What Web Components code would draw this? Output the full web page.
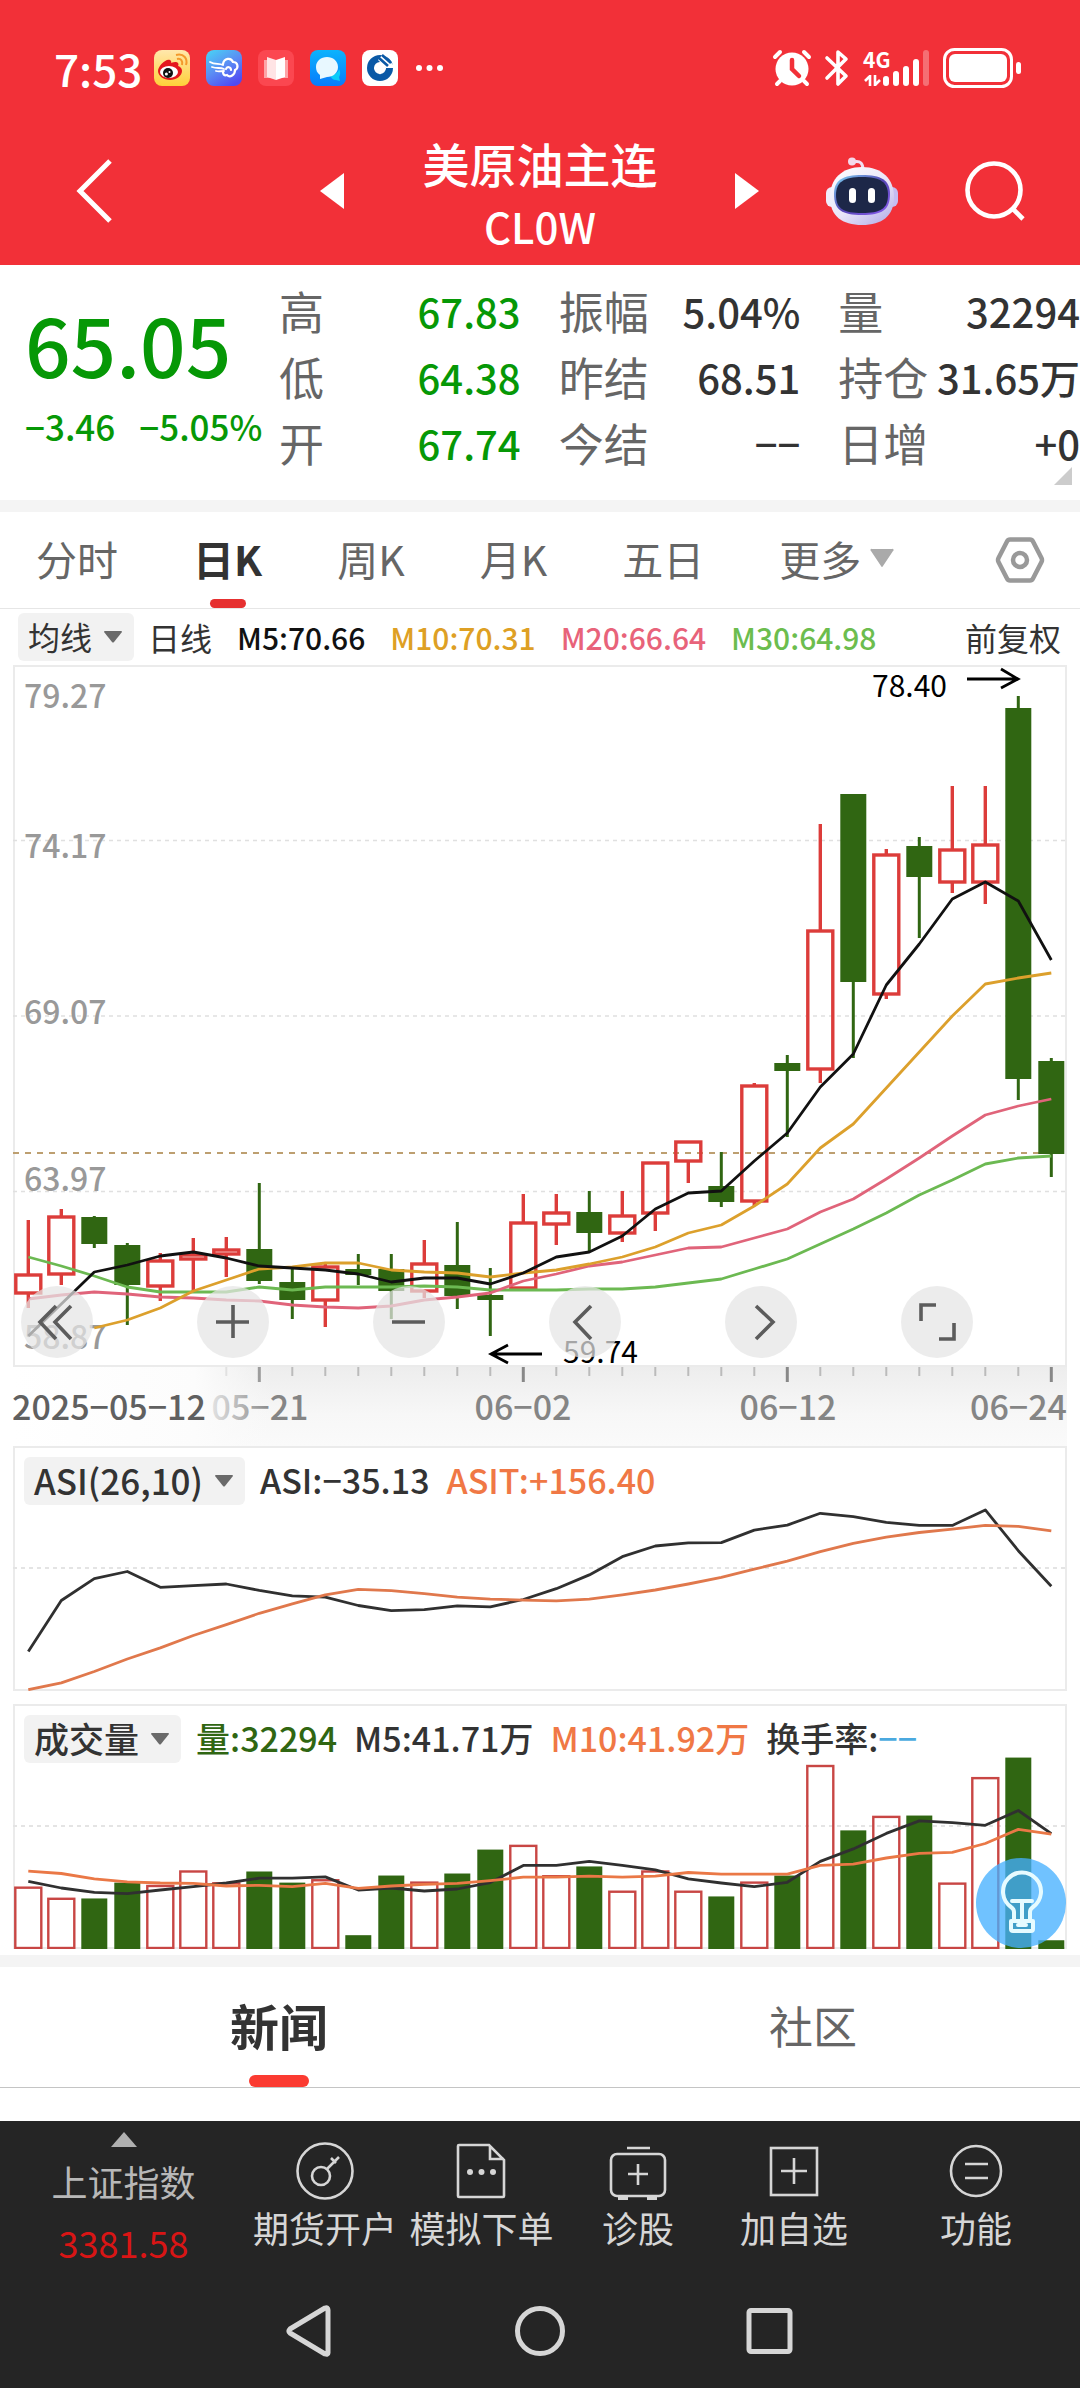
<!DOCTYPE html>
<html lang="zh-CN">
<head>
<meta charset="utf-8">
<meta name="viewport" content="width=device-width, initial-scale=1">
<title>美原油主连</title>
<style>
  :root {
    --red: #f23038;
    --up: #dc3c3a;
    --down: #306612;
    --green: #069806;
    --ink: #333;
    --muted: #666;
    --line: #ebebeb;
    --chip: #f2f2f2;
    --dark: #252525;
    --orange: #f07845;
  }
  body {
    margin: 0;
    background: #fff;
    color: var(--ink);
    font-family: "Noto Sans CJK SC", "Noto Sans", sans-serif;
  }
</style>
</head>
<body>
<status-bar></status-bar>
<stock-header><span slot="name">美原油主连</span><span slot="code">CL0W</span></stock-header>
<quote-panel>
  <span slot="price">65.05</span><span slot="change">−3.46</span><span slot="percent">−5.05%</span>
  <quote-cell tone="down" label="高">67.83</quote-cell>
  <quote-cell label="振幅">5.04%</quote-cell>
  <quote-cell label="量">32294</quote-cell>
  <quote-cell tone="down" label="低">64.38</quote-cell>
  <quote-cell label="昨结">68.51</quote-cell>
  <quote-cell label="持仓">31.65万</quote-cell>
  <quote-cell tone="down" label="开">67.74</quote-cell>
  <quote-cell label="今结">−−</quote-cell>
  <quote-cell label="日增">+0</quote-cell>
</quote-panel>
<period-tabs></period-tabs>
<average-legend></average-legend>
<candle-chart></candle-chart>
<date-axis></date-axis>
<indicator-panel kind="asi" label="ASI(26,10)">
  <span>ASI:−35.13</span>
  <span style="color: var(--orange)">ASIT:+156.40</span>
</indicator-panel>
<indicator-panel kind="volume" label="成交量">
  <span style="color: var(--down)">量:32294</span>
  <span>M5:41.71万</span>
  <span style="color: var(--orange)">M10:41.92万</span>
  <span>换手率:<span style="color: #4ba9df">−−</span></span>
  <tip-button slot="tip"></tip-button>
</indicator-panel>
<news-tabs></news-tabs>
<market-footer></market-footer>
<system-nav></system-nav>

<script>
const resetButton = `
  button {
    font: inherit;
    color: inherit;
    border: none;
    background: none;
    padding: 0;
    margin: 0;
  }
  svg { display: block; overflow: visible; }
`;

// bar centres, 32 bars on a 33px step
const barX = i => 28.3 + i * 33;
const polyline = (values, color, y, start = 0) =>
  `<polyline fill="none" stroke="${color}" stroke-width="2.8" stroke-linejoin="round" points="${
    values.map((v, i) => `${barX(i + start).toFixed(1)},${y(v).toFixed(1)}`).join(" ")}"/>`;

class StatusBar extends HTMLElement {
  constructor() {
    super();
    this.attachShadow({ mode: "open" });
    this.shadowRoot.innerHTML = `
    <style>
      ${resetButton}
      :host {
        display: flex;
        align-items: center;
        justify-content: space-between;
        background: var(--red);
        color: #fff;
        padding: 32px 59px 8px 54px;
        height: 72px;
      }
      .side { display: flex; align-items: center; }
      .time { font-size: 44px; line-height: 64px; font-weight: 500; margin-right: 12px; }
      .apps { display: flex; gap: 16px; margin-right: 18px; }
      .right { gap: 14px; }
    </style>
    <div class="side">
      <span class="time">7:53</span>
      <div class="apps">
        <svg width="36" height="36" viewBox="0 0 36 36">
          <defs><linearGradient id="w" x2="0" y2="1"><stop stop-color="#ffe7ac"/><stop offset="1" stop-color="#ffd039"/></linearGradient></defs>
          <rect width="36" height="36" rx="8" fill="url(#w)"/>
          <path d="M4 21c0-5 8-13 12-11 2 1 1 3 1 3s5-2 7 0c1 1 0 3 0 3s4 1 4 5c0 5-6 9-12 9S4 26 4 21z" fill="#e5161d"/>
          <ellipse cx="15" cy="22" rx="9" ry="6" fill="#fff"/>
          <circle cx="14" cy="23" r="5" fill="#111"/><circle cx="12.400" cy="24" r="1.500" fill="#fff"/><circle cx="15.500" cy="22" r="1" fill="#fff"/>
          <path d="M23 9c4-1 6 2 5 6M22 5c8-2 12 4 10 10" fill="none" stroke="#f3992b" stroke-width="2"/>
        </svg>
        <svg width="36" height="36" viewBox="0 0 36 36">
          <defs><linearGradient id="c" x1=".1" y1="0" x2=".7" y2="1"><stop stop-color="#49d0f5"/><stop offset=".5" stop-color="#5b8df4"/><stop offset="1" stop-color="#5149f2"/></linearGradient></defs>
          <rect width="36" height="36" rx="8" fill="url(#c)"/>
          <g fill="none" stroke="#fff" stroke-linecap="round">
            <path d="M4 12c5 3 9 1 13 3M6 17c5 2 8 0 12 2M10 21c3 1 5 0 8 0" stroke-width="1.800"/>
            <path d="M17 14c1-6 8-7 10-2 5 0 6 6 2 8 0 5-5 8-8 5-3 1-4-1-4-3M20 19c1-3 5-2 5 1" stroke-width="2.200"/>
          </g>
        </svg>
        <svg width="36" height="36" viewBox="0 0 36 36">
          <rect width="36" height="36" rx="8" fill="#fb4750"/>
          <path d="M6 10h24v18H6z" fill="#fda3a6"/>
          <path d="M9 7l9 3v20l-9-3z" fill="#ffe4e5"/><path d="M27 7l-9 3v20l9-3z" fill="#fff"/>
        </svg>
        <svg width="36" height="36" viewBox="0 0 36 36">
          <defs><linearGradient id="m" x2="0" y2="1"><stop stop-color="#0cb3fd"/><stop offset="1" stop-color="#087bfb"/></linearGradient></defs>
          <rect width="36" height="36" rx="8" fill="url(#m)"/>
          <path d="M20 25c6 0 9-4 9-6 2 3 1 7 0 8l1 4-4-1c-3 0-5-2-6-5z" fill="#09ccf9"/>
          <path d="M17 7c6 0 11 4 11 10s-5 10-11 10l-7 2 0-4c-3-2-4-5-4-8 0-6 5-10 11-10z" fill="#e8f8ff"/>
        </svg>
        <svg width="36" height="36" viewBox="0 0 36 36">
          <rect width="36" height="36" rx="8" fill="#fff"/>
          <circle cx="18" cy="18" r="9.500" fill="none" stroke="#0a59a6" stroke-width="7"/>
          <path d="M18 12.500l6 6-6 6-6-6z" fill="#fff"/>
          <path d="M21 4l13 14H24l-8-8z" fill="#fff"/>
          <path d="M20 5l9 8M17 8l9 8" stroke="#0a59a6" stroke-width="2.600"/>
        </svg>
      </div>
      <svg width="28" height="8" viewBox="0 0 28 8" fill="#fff"><circle cx="3" cy="4" r="3"/><circle cx="13.500" cy="4" r="3"/><circle cx="24" cy="4" r="3"/></svg>
    </div>
    <div class="side right">
      <svg width="38" height="38" viewBox="0 0 38 38" fill="none" stroke="#fff" stroke-linecap="round">
        <circle cx="19" cy="20" r="16.500" fill="#fff" stroke="none"/>
        <path d="M2 8l5-5M36 8l-5-5M7 32l-3 3M31 32l3 3" stroke-width="4"/>
        <path d="M19 11v9l7 7" stroke="var(--red)" stroke-width="4.500"/>
      </svg>
      <svg width="24" height="38" viewBox="0 0 24 38" fill="none" stroke="#fff" stroke-width="3.600" stroke-linejoin="round" stroke-linecap="round">
        <path d="M2 9l19 18-8 8V3l8 7L2 29"/>
      </svg>
      <svg width="66" height="38" viewBox="0 0 66 38">
        <text x="0" y="19" font-size="21" font-weight="700" fill="#fff">4G</text>
        <path d="M7 26v11M7 27l-5 5M12 26v11M12 36l5-5" fill="none" stroke="#fff" stroke-width="2.600"/>
        <g stroke="#fff" stroke-width="6" stroke-linecap="round"><path d="M23 30v4M33 25v9M43 20v14M53 13v21"/><path d="M63 4v30" opacity=".3"/></g>
      </svg>
      <svg width="78" height="40" viewBox="0 0 78 40">
        <rect x="1.500" y="1.500" width="67" height="37" rx="10" fill="none" stroke="#fff" stroke-width="3"/>
        <rect x="6" y="6" width="58" height="28" rx="6" fill="#fff"/>
        <rect x="73" y="14" width="5" height="12" rx="2.500" fill="#fff"/>
      </svg>
    </div>
    `;
  }
}
customElements.define("status-bar", StatusBar);

class StockHeader extends HTMLElement {
  constructor() {
    super();
    this.attachShadow({ mode: "open" });
    this.shadowRoot.innerHTML = `
    <style>
      ${resetButton}
      :host {
        display: grid;
        grid-template-columns: 1fr auto 1fr;
        align-items: center;
        background: var(--red);
        color: #fff;
        height: 153px;
      }
      .left, .right { display: flex; align-items: center; justify-content: space-between; }
      .left { padding: 4px 79px 0 76px; }
      .right { padding: 4px 55px 0 77px; }
      .title { text-align: center; font-weight: 500; padding-top: 10px; }
      .name { font-size: 47px; line-height: 64px; }
      .code { font-size: 42px; line-height: 62px; }
    </style>
    <div class="left">
      <button aria-label="返回"><svg width="37" height="66" viewBox="0 0 37 66"><path d="M34 3L4 33l30 30" fill="none" stroke="#fff" stroke-width="5"/></svg></button>
      <button aria-label="上一个"><svg width="24" height="36" viewBox="0 0 24 36"><path d="M24 0v36L0 18z" fill="#fff"/></svg></button>
    </div>
    <div class="title">
      <div class="name"><slot name="name"></slot></div>
      <div class="code"><slot name="code"></slot></div>
    </div>
    <div class="right">
      <button aria-label="下一个"><svg width="24" height="36" viewBox="0 0 24 36"><path d="M0 0v36l24-18z" fill="#fff"/></svg></button>
      <button aria-label="助手">
        <svg width="72" height="68" viewBox="0 0 72 68">
          <defs>
            <linearGradient id="h" x2=".8" y2="1"><stop stop-color="#fff"/><stop offset=".6" stop-color="#e9e4f8"/><stop offset="1" stop-color="#b9b4ea"/></linearGradient>
            <linearGradient id="v" x2="1" y2="1"><stop stop-color="#7fd8f5"/><stop offset=".5" stop-color="#5646b5"/><stop offset="1" stop-color="#8b5cf0"/></linearGradient>
          </defs>
          <path d="M27 5c8-2 10 2 10 8" fill="none" stroke="#f1dff2" stroke-width="3"/>
          <circle cx="26" cy="4.500" r="4" fill="#f4d8ea"/>
          <rect x="0" y="30" width="12" height="20" rx="6" fill="#f0ecfb"/><rect x="60" y="30" width="12" height="20" rx="6" fill="#c5bdf2"/>
          <path d="M36 10c20 0 32 12 32 30 0 19-12 28-32 28S4 59 4 40C4 22 16 10 36 10z" fill="url(#h)"/>
          <path d="M36 18c19 0 28 5 28 19 0 16-8 21-28 21S8 53 8 37c0-14 9-19 28-19z" fill="url(#v)"/>
          <path d="M36 20c18 0 26 5 26 18 0 14-8 18-26 18s-26-4-26-18c0-13 8-18 26-18z" fill="#1d2748"/>
          <rect x="23" y="31" width="7" height="15" rx="3.500" fill="#fff"/><rect x="42" y="31" width="7" height="15" rx="3.500" fill="#fff"/>
        </svg>
      </button>
      <button aria-label="搜索"><svg width="60" height="60" viewBox="0 0 60 60" fill="none" stroke="#fff" stroke-width="4.600"><circle cx="29" cy="29" r="26.500"/><path d="M48 48l10 10"/></svg></button>
    </div>
    `;
  }
}
customElements.define("stock-header", StockHeader);

class QuoteCell extends HTMLElement {
  constructor() {
    super();
    this.attachShadow({ mode: "open" });
    this.shadowRoot.innerHTML = `
    <style>
      :host {
        display: flex;
        justify-content: space-between;
        align-items: center;
        line-height: 66px;
        white-space: nowrap;
        font-size: 40px;
        font-weight: 500;
      }
      :host([tone="down"]) { color: var(--green); }
      .label { font-size: 45px; font-weight: 400; color: var(--muted); }
    </style>
    <span class="label">${this.getAttribute("label")}</span>
    <slot></slot>
    `;
  }
}
customElements.define("quote-cell", QuoteCell);

class QuotePanel extends HTMLElement {
  constructor() {
    super();
    this.attachShadow({ mode: "open" });
    this.shadowRoot.innerHTML = `
    <style>
      :host {
        display: flex;
        position: relative;
        padding: 13px 0 24px 25px;
        border-bottom: 12px solid #f4f4f4;
      }
      .summary { flex: 0 0 254px; color: var(--green); font-weight: 500; white-space: nowrap; }
      .price { font-size: 80px; line-height: 116px; padding-top: 7px; }
      .moves { display: flex; gap: 24px; font-size: 35px; line-height: 50px; }
      .grid { flex: 1; display: grid; grid-template-columns: repeat(3, 1fr); column-gap: 38px; }
      .more { position: absolute; right: 8px; bottom: 15px; }
    </style>
    <div class="summary">
      <div class="price"><slot name="price"></slot></div>
      <div class="moves"><slot name="change"></slot><slot name="percent"></slot></div>
    </div>
    <div class="grid"><slot></slot></div>
    <svg class="more" width="18" height="18" viewBox="0 0 18 18"><path d="M18 0v18H0z" fill="#ccc"/></svg>
    `;
  }
}
customElements.define("quote-panel", QuotePanel);

class PeriodTabs extends HTMLElement {
  constructor() {
    super();
    this.attachShadow({ mode: "open" });
    this.shadowRoot.innerHTML = `
    <style>
      ${resetButton}
      :host {
        display: flex;
        align-items: center;
        gap: 75px;
        height: 96px;
        padding: 0 36px;
        border-bottom: 1px solid #e6e6e6;
        font-size: 41px;
        color: var(--muted);
      }
      button { position: relative; height: 96px; line-height: 92px; padding-bottom: 4px; white-space: nowrap; }
      .active { font-weight: 700; color: var(--ink); }
      .active::after {
        content: "";
        position: absolute;
        left: 50%;
        bottom: 0;
        width: 36px;
        height: 9px;
        margin-left: -18px;
        border-radius: 5px;
        background: #e63030;
      }
      .more { display: flex; align-items: center; gap: 10px; }
      .settings { margin-left: auto; padding: 0; }
    </style>
    <button>分时</button>
    <button class="active">日K</button>
    <button>周K</button>
    <button>月K</button>
    <button>五日</button>
    <button class="more">更多<svg width="22" height="18" viewBox="0 0 22 18"><path d="M1 0h20a1 1 0 0 1 1 2L12 17q-1 2-2 0L0 2a1 1 0 0 1 1-2z" fill="#aaa"/></svg></button>
    <button class="settings" aria-label="设置"><svg width="48" height="46" viewBox="0 0 48 46" fill="none" stroke="#999" stroke-width="4.500" stroke-linejoin="round"><path d="M14 2.500h20q2 0 3 2L45.500 21q1 2 0 4L37 41.500q-1 2-3 2H14q-2 0-3-2L2.500 25q-1-2 0-4L11 4.500q1-2 3-2z"/><circle cx="24" cy="23" r="7"/></svg></button>
    `;
  }
}
customElements.define("period-tabs", PeriodTabs);

class MenuChip extends HTMLElement {
  constructor() {
    super();
    this.attachShadow({ mode: "open" });
    this.shadowRoot.innerHTML = `
    <style>
      ${resetButton}
      :host { display: block; }
      button {
        display: flex;
        align-items: center;
        gap: 12px;
        height: 48px;
        padding: 0 12px 0 10px;
        border-radius: 6px;
        background: var(--chip);
        line-height: 46px;
        white-space: nowrap;
      }
      slot { display: block; padding-bottom: 2px; }
    </style>
    <button><slot></slot><svg width="18" height="12" viewBox="0 0 18 12"><path d="M1 0h16q1 0 1 1l-8 10q-1 1-2 0L0 1q0-1 1-1z" fill="#6a6a6a"/></svg></button>
    `;
  }
}
customElements.define("menu-chip", MenuChip);

class AverageLegend extends HTMLElement {
  constructor() {
    super();
    this.attachShadow({ mode: "open" });
    this.shadowRoot.innerHTML = `
    <style>
      ${resetButton}
      :host {
        display: flex;
        align-items: center;
        gap: 25px;
        height: 56px;
        padding: 0 19px 0 18px;
        font-size: 30px;
        font-weight: 500;
        white-space: nowrap;
      }
      menu-chip, .plain { font-size: 32px; font-weight: 400; }
      .first { display: flex; align-items: center; gap: 14px; }
      .adjust { margin-left: auto; }
    </style>
    <div class="first"><menu-chip>均线</menu-chip><span class="plain">日线</span></div>
    <span style="color: #111">M5:70.66</span>
    <span style="color: #dea024">M10:70.31</span>
    <span style="color: #e8637a">M20:66.64</span>
    <span style="color: #6cbd4e">M30:64.98</span>
    <button class="plain adjust">前复权</button>
    `;
  }
}
customElements.define("average-legend", AverageLegend);

// [direction, body top, body bottom, high, low]
const candles = [
  ["u", 1275, 1293, 1220, 1308], ["u", 1217, 1274, 1209, 1285], ["d", 1217, 1244, 1216, 1248], ["d", 1245, 1285, 1243, 1325],
  ["u", 1261, 1286, 1253, 1301], ["u", 1255, 1259, 1238, 1291], ["u", 1250, 1254, 1237, 1277], ["d", 1249, 1281, 1183, 1284],
  ["d", 1282, 1300, 1268, 1319], ["u", 1267, 1300, 1264, 1327], ["d", 1269, 1275, 1254, 1285], ["d", 1269, 1291, 1254, 1319],
  ["u", 1264, 1291, 1240, 1298], ["d", 1265, 1296, 1222, 1309], ["d", 1295, 1300, 1268, 1336], ["u", 1223, 1288, 1194, 1290],
  ["u", 1213, 1224, 1194, 1245], ["d", 1212, 1233, 1191, 1251], ["u", 1216, 1233, 1191, 1242], ["u", 1163, 1213, 1163, 1231],
  ["u", 1142, 1161, 1142, 1183], ["d", 1186, 1202, 1152, 1207], ["u", 1086, 1201, 1083, 1206], ["d", 1063, 1071, 1055, 1137],
  ["u", 931, 1069, 824, 1083], ["d", 794, 982, 794, 1058], ["u", 855, 994, 849, 999], ["d", 846, 877, 837, 938],
  ["u", 850, 882, 786, 893], ["u", 845, 882, 786, 904], ["d", 708, 1079, 696, 1100], ["d", 1061, 1154, 1058, 1177]
];
const averages = {
  m30: [1257, 1266, 1276, 1287, 1292, 1292, 1292, 1287, 1290, 1287, 1287, 1287, 1286, 1287, 1290, 1290, 1290, 1289, 1289, 1287, 1283, 1279, 1269, 1259, 1244, 1229, 1213, 1195, 1180, 1164, 1158, 1156],
  m20: [1299, 1295, 1292, 1294, 1297, 1298, 1300, 1301, 1305, 1307, 1308, 1306, 1300, 1297, 1293, 1281, 1274, 1266, 1262, 1255, 1248, 1247, 1238, 1229, 1212, 1199, 1179, 1158, 1136, 1115, 1106, 1099],
  m10: [1328, 1320, 1308, 1291, 1280, 1269, 1267, 1263, 1263, 1270, 1272, 1273, 1277, 1273, 1270, 1264, 1257, 1247, 1233, 1225, 1206, 1184, 1148, 1124, 1088, 1052, 1016, 984, 978, 973],
  m5: [1336, 1304, 1272, 1265, 1256, 1252, 1258, 1266, 1268, 1270, 1274, 1282, 1278, 1278, 1284, 1273, 1257, 1252, 1236, 1209, 1193, 1191, 1161, 1133, 1087, 1054, 985, 944, 899, 882, 901, 960]
};

class CandleChart extends HTMLElement {
  constructor() {
    super();
    const same = v => v;
    const bars = candles.map(([dir, top, bottom, high, low], i) => {
      const x = barX(i);
      if (dir === "d") {
        return `<path d="M${x} ${high}V${low}" stroke="var(--down)" stroke-width="3"/>
          <rect x="${x - 13}" y="${top}" width="26" height="${bottom - top}" fill="var(--down)"/>`;
      }
      return `<path d="M${x} ${high}V${top}M${x} ${bottom}V${low}" stroke="var(--up)" stroke-width="3.400"/>
        <rect x="${x - 12.5}" y="${top}" width="25" height="${bottom - top}" fill="none" stroke="var(--up)" stroke-width="3.400"/>`;
    }).join("");
    const labels = [["79.27", 708], ["74.17", 858], ["69.07", 1024], ["63.97", 1191], ["58.87", 1349]];
    const icons = {
      "最早": `<path d="M35 20L19 36l16 17M50 20L34 36l16 17"/>`,
      "放大": `<path d="M36 19v33M19 36h33"/>`,
      "缩小": `<path d="M19 36h33"/>`,
      "左移": `<path d="M42 20L26 36l16 17"/>`,
      "右移": `<path d="M31 20l17 16-17 17"/>`,
      "全屏": `<path d="M20 35V19h15M53 37v16H38"/>`
    };
    this.attachShadow({ mode: "open" });
    this.shadowRoot.innerHTML = `
    <style>
      ${resetButton}
      :host { display: block; position: relative; margin: 0 13px; }
      .tools {
        position: absolute;
        left: 8px;
        right: 94px;
        bottom: 9px;
        display: flex;
        justify-content: space-between;
      }
      .tools button {
        width: 72px;
        height: 72px;
        border-radius: 50%;
        background: rgba(229, 229, 229, .72);
      }
      .grid { stroke: #e0e0e0; stroke-width: 1.5; stroke-dasharray: 4 4; }
    </style>
    <svg width="100%" viewBox="13 665 1054 702">
      <rect x="14" y="666" width="1052" height="700" fill="none" stroke="var(--line)" stroke-width="2"/>
      <g class="grid"><path d="M13 840.5H1067M13 1016H1067M13 1191.500H1067"/></g>
      <path d="M13 1153H1067" stroke="#bd9f70" stroke-width="2" stroke-dasharray="6 6"/>
      <g font-size="32" font-weight="500" fill="#999">${labels.map(([t, y]) => `<text x="24" y="${y}">${t}</text>`).join("")}</g>
      ${bars}
      ${polyline(averages.m30, "#6cb952", same)}
      ${polyline(averages.m20, "#e0647a", same)}
      ${polyline(averages.m10, "#dca02c", same, 2)}
      ${polyline(averages.m5, "#111", same)}
      <g fill="#000" font-size="30"><text x="872" y="697">78.40</text><text x="563" y="1363">59.74</text></g>
      <path d="M967 679h51M1001 669l17 10-17 9M542 1354h-51M508 1345l-17 9 17 9" fill="none" stroke="#000" stroke-width="2.800"/>
    </svg>
    <div class="tools">${Object.entries(icons).map(([name, path]) => `
      <button aria-label="${name}"><svg width="72" height="72" viewBox="0 0 72 72" fill="none" stroke="#5c5c5c" stroke-width="3.600">${path}</svg></button>`).join("")}
    </div>
    `;
  }
}
customElements.define("candle-chart", CandleChart);

class DateAxis extends HTMLElement {
  constructor() {
    super();
    let ticks = "";
    for (let i = 6; i < 32; i++) {
      const major = [7, 15, 23, 31].includes(i);
      ticks += `<path d="M${barX(i)} 0v${major ? 15 : 9}" stroke="${major ? "#888" : "#bbb"}" stroke-width="${major ? 3 : 2}"/>`;
    }
    this.attachShadow({ mode: "open" });
    this.shadowRoot.innerHTML = `
    <style>
      :host { display: block; margin: 0 13px; }
      svg { display: block; }
    </style>
    <svg width="100%" viewBox="13 0 1054 79" font-size="34" font-weight="500">
      <defs>
        <linearGradient id="bg" x2="0" y2="1"><stop stop-color="#ededed"/><stop offset=".6" stop-color="#f7f7f7"/><stop offset="1" stop-color="#fafafa"/></linearGradient>
        <linearGradient id="fade"><stop stop-color="#fff"/><stop offset=".7" stop-color="#fcfcfc"/><stop offset="1" stop-color="#fafafa" stop-opacity="0"/></linearGradient>
      </defs>
      <rect x="13" width="1054" height="79" fill="url(#bg)"/>
      ${ticks}
      <g fill="#858585">
        <text x="260" y="53" text-anchor="middle">05−21</text>
        <text x="523" y="53" text-anchor="middle">06−02</text>
        <text x="788" y="53" text-anchor="middle">06−12</text>
        <text x="1067" y="53" text-anchor="end">06−24</text>
      </g>
      <rect x="13" width="260" height="79" fill="url(#fade)"/>
      <text x="12" y="53" fill="#606060">2025−05−12</text>
    </svg>
    `;
  }
}
customElements.define("date-axis", DateAxis);

const asi = {
  line: [655, 503, 438, 417, 464, 459, 454, 473, 489, 493, 518, 533, 530, 519, 522, 500, 468, 427, 373, 341, 332, 331, 294, 279, 244, 254, 271, 280, 280, 234, 355, 461],
  trend: [768, 748, 714, 677, 644, 607, 575, 541, 513, 486, 470, 474, 483, 493, 499, 502, 504, 499, 486, 472, 454, 434, 410, 386, 358, 333, 315, 301, 291, 280, 283, 296]
};
const volume = {
  tops: [1353, 1386, 1385, 1338, 1348, 1305, 1340, 1305, 1338, 1331, 1494, 1317, 1338, 1311, 1240, 1229, 1319, 1290, 1365, 1305, 1365, 1379, 1338, 1317, 992, 1183, 1143, 1139, 1341, 1028, 967, 1509],
  m5: [1334, 1354, 1367, 1371, 1360, 1350, 1339, 1325, 1325, 1321, 1360, 1354, 1363, 1357, 1338, 1287, 1287, 1275, 1287, 1300, 1327, 1339, 1350, 1337, 1275, 1238, 1192, 1155, 1160, 1168, 1124, 1193],
  m10: [1304, 1311, 1327, 1336, 1339, 1340, 1348, 1346, 1350, 1340, 1355, 1348, 1343, 1340, 1332, 1322, 1322, 1319, 1322, 1319, 1308, 1313, 1313, 1313, 1287, 1283, 1265, 1251, 1248, 1222, 1180, 1194]
};

class IndicatorPanel extends HTMLElement {
  constructor() {
    super();
    this.attachShadow({ mode: "open" });
    this.shadowRoot.innerHTML = `
    <style>
      :host { display: grid; position: relative; margin: 0 13px 13px; white-space: nowrap; }
      :host([kind="volume"]) { margin-bottom: 6px; }
      svg { display: block; grid-area: 1 / 1; }
      header {
        grid-area: 1 / 1;
        display: flex;
        align-items: center;
        align-self: start;
        gap: 15px;
        padding: 11px 11px 0;
        font-size: 34px;
        font-weight: 500;
      }
      menu-chip { font-size: 35px; }
      .values { display: flex; gap: 17px; line-height: 46px; padding-bottom: 2px; }
      .grid { stroke: #e4e4e4; stroke-width: 2; stroke-dasharray: 4 4; }
    </style>
    <svg width="100%" viewBox="13 0 1054 245">
      <rect x="14" y="1" width="1052" height="243" fill="none" stroke="var(--line)" stroke-width="2"/>
      <path class="grid" d="M13 122H1067"/>
      ${this.getAttribute("kind") === "asi" ? this.drawAsi() : this.drawVolume()}
    </svg>
    <header><menu-chip>${this.getAttribute("label")}</menu-chip><div class="values"><slot></slot></div></header>
    <slot name="tip"></slot>
    `;
  }

  drawAsi() {
    const y = v => 1 + (v - 47) * 243 / 722;
    return polyline(asi.line, "#303030", y) + polyline(asi.trend, "#e0784c", y);
  }

  drawVolume() {
    const y = v => 1 + (v - 811) * 243 / 721;
    const bars = volume.tops.map((v, i) => {
      const top = y(v);
      return candles[i][0] === "d"
        ? `<rect x="${barX(i) - 13}" y="${top}" width="26" height="${245 - top}" fill="var(--down)"/>`
        : `<rect x="${barX(i) - 13}" y="${top}" width="26" height="${244 - top}" fill="none" stroke="#c84644" stroke-width="2.400"/>`;
    }).join("");
    return bars + polyline(volume.m5, "#303030", y) + polyline(volume.m10, "#ea7846", y);
  }
}
customElements.define("indicator-panel", IndicatorPanel);

class TipButton extends HTMLElement {
  constructor() {
    super();
    this.attachShadow({ mode: "open" });
    this.shadowRoot.innerHTML = `
    <style>
      ${resetButton}
      :host { position: absolute; right: 1px; bottom: 1px; }
      button { display: block; width: 90px; height: 90px; border-radius: 50%; background: rgba(69, 176, 255, .77); }
    </style>
    <button aria-label="提示">
      <svg width="90" height="90" viewBox="0 0 90 90" fill="none" stroke="#e6fbff" stroke-width="4" stroke-linejoin="round" stroke-linecap="round">
        <path d="M38 63V54Q38 51 35 49A19 19 0 1 1 57 49Q54 51 54 54V63M35 63h22v8q0 2-2 2H37q-2 0-2-2zM36 43h20M46 43v19M42 67h8"/>
      </svg>
    </button>
    `;
  }
}
customElements.define("tip-button", TipButton);

class NewsTabs extends HTMLElement {
  constructor() {
    super();
    this.attachShadow({ mode: "open" });
    this.shadowRoot.innerHTML = `
    <style>
      ${resetButton}
      :host {
        display: grid;
        grid-template-columns: 1fr 1fr;
        border-top: 12px solid #f4f4f4;
        border-bottom: 1px solid #c4c4c4;
        padding-left: 12px;
        margin-bottom: 33px;
      }
      button { position: relative; height: 120px; padding-bottom: 5px; font-size: 44px; color: var(--muted); }
      .active { font-size: 49px; font-weight: 700; color: var(--ink); }
      .active::after {
        content: "";
        position: absolute;
        left: 50%;
        bottom: 0;
        width: 60px;
        height: 12px;
        margin-left: -30px;
        border-radius: 6px;
        background: #fb3b31;
      }
    </style>
    <button class="active">新闻</button>
    <button>社区</button>
    `;
  }
}
customElements.define("news-tabs", NewsTabs);

class MarketFooter extends HTMLElement {
  constructor() {
    super();
    this.attachShadow({ mode: "open" });
    this.shadowRoot.innerHTML = `
    <style>
      ${resetButton}
      :host {
        display: grid;
        grid-template-columns: 247fr 156fr 157fr 156fr 156fr 208fr;
        background: var(--dark);
        color: #d6d6d6;
        font-size: 36px;
        height: 165px;
        white-space: nowrap;
      }
      button {
        display: flex;
        flex-direction: column;
        align-items: center;
        padding-top: 20px;
        line-height: 52px;
      }
      .index { color: #b8b8b8; padding-top: 11px; gap: 8px; }
      .index .value { color: #d91515; line-height: 54px; }
    </style>
    <button class="index">
      <svg width="26" height="15" viewBox="0 0 26 15"><path d="M13 0l13 15H0z" fill="#b0b0b0"/></svg>
      <span>上证指数</span><span class="value">3381.58</span>
    </button>
    ${this.item("期货开户", `<circle cx="30" cy="30" r="27.500"/><circle cx="26" cy="35" r="9"/><path d="M32 28l12-12M36 17l5 5"/>`)}
    ${this.item("模拟下单", `<path d="M7 4h30l15 15v36q0 1-1 1H7q-1 0-1-1V5q0-1 1-1zM38 5v13h14"/><g fill="#d6d6d6" stroke="none"><circle cx="18" cy="31" r="3"/><circle cx="29.500" cy="31" r="3"/><circle cx="41" cy="31" r="3"/></g>`)}
    ${this.item("诊股", `<rect x="3" y="13" width="54" height="42" rx="6"/><path d="M19 7h23M30 23v21M20 33h20"/><path d="M10 57h10M39 57h10" stroke-width="4"/>`)}
    ${this.item("加自选", `<rect x="7" y="7" width="46" height="47"/><path d="M30 17v26M17 30h26"/>`)}
    ${this.item("功能", `<circle cx="30" cy="30" r="25"/><path d="M19 23h23M19 37h23"/>`)}
    `;
  }

  item(label, icon) {
    return `<button><svg width="60" height="60" viewBox="0 0 60 60" fill="none" stroke="#d6d6d6" stroke-width="2.600">${icon}</svg><span>${label}</span></button>`;
  }
}
customElements.define("market-footer", MarketFooter);

class SystemNav extends HTMLElement {
  constructor() {
    super();
    this.attachShadow({ mode: "open" });
    this.shadowRoot.innerHTML = `
    <style>
      ${resetButton}
      :host {
        display: flex;
        justify-content: center;
        align-items: flex-start;
        gap: 180px;
        height: 82px;
        padding-top: 20px;
        background: var(--dark);
      }
    </style>
    <button aria-label="返回"><svg width="50" height="50" viewBox="0 0 50 50" fill="none" stroke="#d6d6d6" stroke-width="5" stroke-linejoin="round"><path d="M43 4v43q0 2-3 1L5 27q-2-2 0-4L40 2q3-1 3 2z"/></svg></button>
    <button aria-label="主页"><svg width="50" height="50" viewBox="0 0 50 50" fill="none" stroke="#d6d6d6" stroke-width="5"><circle cx="25" cy="25" r="22.500"/></svg></button>
    <button aria-label="最近任务"><svg width="50" height="50" viewBox="0 0 50 50" fill="none" stroke="#d6d6d6" stroke-width="5"><rect x="4" y="4.500" width="41" height="41" rx="2"/></svg></button>
    `;
  }
}
customElements.define("system-nav", SystemNav);
</script>
</body>
</html>
